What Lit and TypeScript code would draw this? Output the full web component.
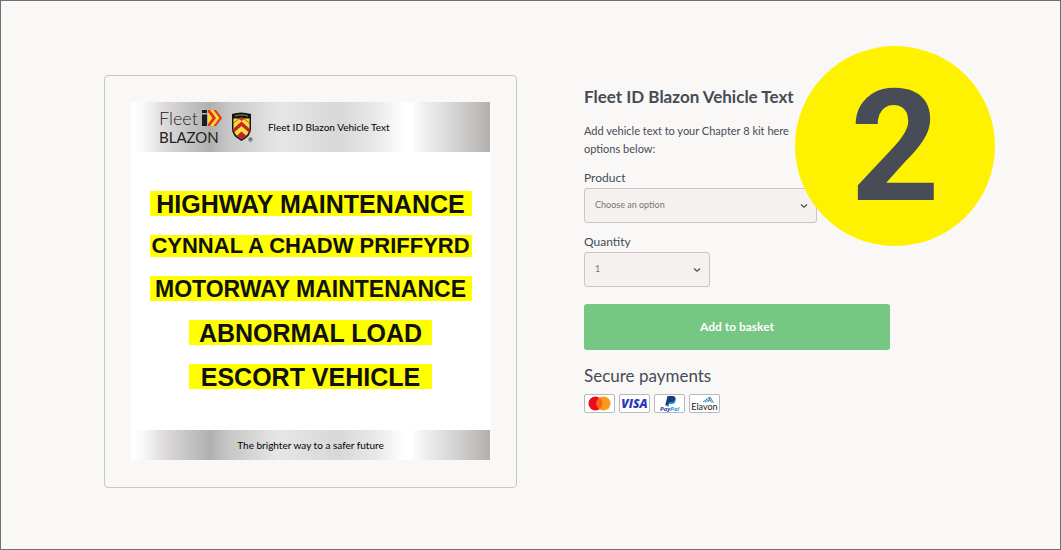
import { LitElement, html, css, svg } from "lit";
import { customElement } from "lit/decorators.js";

const chevron = html`<svg class="chevron" viewBox="0 0 8 6" width="8" height="6" aria-hidden="true">
  <path d="M1 1.500 L4 4.200 L7 1.500" fill="none" stroke="#4a4e57" stroke-width="1.300" />
</svg>`;

@customElement("product-artwork")
export class ProductArtwork extends LitElement {
  static styles = css`
    :host { display: block; background: #fff; color: #111; }
    .band {
      display: flex;
      align-items: center;
      background: linear-gradient(90deg, #fff 0%, #fbfafa 3%, #dedbdb 9%, #c9c8c8 15%, #b0b0af 22%,
        #c6c6c6 27%, #e6e6e6 41%, #d8d8d8 58%, #e8e8e8 68%, #fff 76%, #fff 78%, #f2f2f2 81%, #e2e2e2 86%, #cecdcc 92%, #b2b0ae 100%);
    }
    .top { height: 50px; padding-left: 28px; }
    .logo { display: grid; width: 66px; font-family: Lato, sans-serif; color: #222; }
    .row { display: flex; align-items: center; gap: 4px; height: 20px; }
    .fleet { font-size: 18px; line-height: 20px; font-weight: 300; }
    .blazon { font-size: 15px; line-height: 18px; }
    .crest { margin-left: 6px; }
    .title { margin-left: 14px; white-space: nowrap; }
    .title, .strap { font: 400 10px/14px Lato, sans-serif; color: #000; }
    .bottom { height: 30px; justify-content: center; }
    .signs {
      height: 278px;
      box-sizing: border-box;
      padding-top: 39px;
      display: flex;
      flex-direction: column;
      align-items: center;
      gap: 19px;
      margin: 0;
      list-style: none;
      padding-left: 0;
      font-family: "Liberation Sans", Arial, sans-serif;
      font-weight: 700;
    }
    .sign {
      box-sizing: border-box;
      background: #ff0;
      height: 25px;
      line-height: 26px;
      font-size: 25px;
      text-align: center;
      white-space: nowrap;
      width: 322px;
    }
    .small { height: 22px; line-height: 22px; font-size: 22px; }
    .medium { font-size: 23px; }
    .short { width: 243px; }
  `;

  render() {
    return html`
      <div class="band top">
        <div class="logo">
          <div class="row">
            <span class="fleet">Fleet</span>
            <svg width="20" height="16" viewBox="0 0 20 16" aria-hidden="true">
              <path d="M0 0h5v3H0zM0 4.500h5V16H0z" fill="#1b1d20" />
              <path d="M6 0h7l7 8-7 8H6z" fill="#fbdc30" />
              <path d="M6 0h2l6 8-6 8H6v-2l4.500-6L6 2z" fill="#e0301e" />
              <path d="M11.500 0H14l6 8-6 8h-2.500l6-8z" fill="#e0301e" />
            </svg>
          </div>
          <span class="blazon">BLAZON</span>
        </div>
        <svg class="crest" width="23" height="32" viewBox="0 0 23 32" aria-hidden="true">
          <path d="M1 3Q10 0 20 3V18Q20 25 10.500 30Q1 25 1 18z" fill="#151510" />
          <path d="M4 5Q10.500 3 17 5" fill="none" stroke="#5e6a39" stroke-width="1.500" />
          <path d="M2.500 7.500h16V18Q18 24 10.500 28Q3 24 2.500 18z" fill="#f4df3c" />
          <path d="M7.500 7.500h6l-3 2.500z" fill="#c9202b" />
          <path d="M2.500 17.500l8-7 8 7v4.500l-8-7-7.500 6.500z" fill="#c9202b" />
          <path d="M5.500 25l5-4.500 5 4.500-5 3z" fill="#c9202b" />
          <path d="M2.500 12l8-6 8 6" fill="none" stroke="#c9202b" stroke-width=".8" />
          <circle cx="19.500" cy="28.500" r="1.700" fill="none" stroke="#333" stroke-width=".7" />
          <path d="M19 29.500v-2h1v1h-1" fill="none" stroke="#333" stroke-width=".5" />
        </svg>
        <span class="title">Fleet ID Blazon Vehicle Text</span>
      </div>
      <ul class="signs">
        <li class="sign">HIGHWAY MAINTENANCE</li>
        <li class="sign small">CYNNAL A CHADW PRIFFYRD</li>
        <li class="sign medium">MOTORWAY MAINTENANCE</li>
        <li class="sign short">ABNORMAL LOAD</li>
        <li class="sign short">ESCORT VEHICLE</li>
      </ul>
      <div class="band bottom"><span class="strap">The brighter way to a safer future</span></div>
    `;
  }
}

const cards = [
  {
    name: "Mastercard",
    art: svg`<circle cx="11.500" cy="9.500" r="7" fill="#eb0a1e"/><circle cx="19.500" cy="9.500" r="7" fill="#f79a1d"/>
      <path d="M15.500 3.800a7 7 0 0 1 0 11.400a7 7 0 0 1 0-11.400z" fill="#fb6315"/>`,
  },
  {
    name: "Visa",
    art: svg`<text x="15.500" y="14" text-anchor="middle" font-family="Open Sans, sans-serif" font-size="12"
      font-weight="800" font-style="italic" fill="#2a38c0">VISA</text>`,
  },
  {
    name: "PayPal",
    art: svg`<path d="M13.500 2h5q3.500 0 3 3.500q-.6 3.500-4.500 3.500h-2l-.6 2.500h-3.200z" fill="#1b3a7d"/>
      <path d="M21.300 4.500q1.200 5.500-4.300 5.500h-1.600l-.6 2.500h-2l.5-2h1.700l.5-2.500h2q3 0 3.800-3.500z" fill="#1d8fd8"/>
      <text x="6" y="17" font-family="Open Sans, sans-serif" font-size="6" font-weight="700" font-style="italic"
        fill="#24458d">Pay<tspan fill="#2a9be0">Pal</tspan></text>`,
  },
  {
    name: "Elavon",
    art: svg`<path d="M14 8l7-5 3.500 6M21 3l-1.500 5M16 8l5-2.500 1.500 3" fill="none" stroke="#3a86b5" stroke-width="1"/>
      <text x="15.500" y="15.500" text-anchor="middle" font-family="Lato, sans-serif" font-size="9"
        fill="#222">Elavon</text>`,
  },
];

@customElement("app-root")
export class AppRoot extends LitElement {
  static styles = css`
    :host { display: block; }
    .page {
      box-sizing: border-box;
      min-height: 100vh;
      border: 1px solid #707070;
      background: #f9f8f6;
      color: #474b55;
      font-family: Lato, sans-serif;
      padding: 74px 24px 61px 103px;
      position: relative;
    }
    .product {
      display: grid;
      grid-template-columns: minmax(0, 413px) minmax(0, 306px);
      column-gap: 67px;
      align-items: start;
    }
    .frame { border: 1px solid #c9c8c8; border-radius: 4px; padding: 26px 26px 27px; }
    .info { padding-top: 10px; }
    h1 { margin: 0 0 13px; font-size: 17px; line-height: 24px; font-weight: 700; white-space: nowrap; }
    p { margin: 0 0 11px; font-size: 11px; line-height: 18px; white-space: nowrap; }
    label { display: block; font-size: 12px; line-height: 18px; margin-bottom: 1px; }
    .field { display: grid; align-items: center; margin-bottom: 10px; }
    .field > * { grid-area: 1 / 1; }
    .wide { width: 233px; }
    .narrow { width: 126px; margin-bottom: 17px; }
    select {
      appearance: none;
      width: 100%;
      height: 35px;
      border: 1px solid #cdc3c8;
      border-radius: 3px;
      background: #f4f1ee;
      color: #777;
      font: 9px/14px Lato, sans-serif;
      padding: 0 10px 2px;
    }
    .chevron { justify-self: end; margin-right: 9px; pointer-events: none; }
    button {
      display: block;
      width: 100%;
      height: 46px;
      border: 0;
      border-radius: 3px;
      background: #75c783;
      color: #fff;
      font: 700 12px/18px Lato, sans-serif;
    }
    h2 { margin: 14px 0 6px; font-size: 17px; line-height: 24px; font-weight: 400; }
    .cards { display: flex; gap: 4px; margin: 0; padding: 0; list-style: none; }
    .card {
      box-sizing: border-box;
      width: 31px;
      height: 19px;
      border: 1px solid #b9b9bd;
      border-radius: 2px;
      background: #fff;
      overflow: hidden;
    }
    .card svg { display: block; margin: -1px; }
    .step {
      position: absolute;
      left: 794px;
      top: 45px;
      width: 200px;
      height: 200px;
      border-radius: 50%;
      background: #fff200;
      color: #474c57;
      font: 700 156px/202px Roboto, sans-serif;
      text-align: center;
    }
  `;

  render() {
    return html`
      <main class="page">
        <section class="product">
          <div class="frame"><product-artwork></product-artwork></div>
          <div class="info">
            <h1>Fleet ID Blazon Vehicle Text</h1>
            <p>Add vehicle text to your Chapter 8 kit here<br />options below:</p>
            <label for="product">Product</label>
            <div class="field wide">
              <select id="product"><option>Choose an option</option></select>
              ${chevron}
            </div>
            <label for="quantity">Quantity</label>
            <div class="field narrow">
              <select id="quantity"><option>1</option></select>
              ${chevron}
            </div>
            <button type="button">Add to basket</button>
            <h2>Secure payments</h2>
            <ul class="cards">
              ${cards.map(
                (card) => html`<li class="card">
                  <svg width="31" height="19" viewBox="0 0 31 19" role="img" aria-label=${card.name}>${card.art}</svg>
                </li>`
              )}
            </ul>
          </div>
        </section>
        <div class="step">2</div>
      </main>
    `;
  }
}
